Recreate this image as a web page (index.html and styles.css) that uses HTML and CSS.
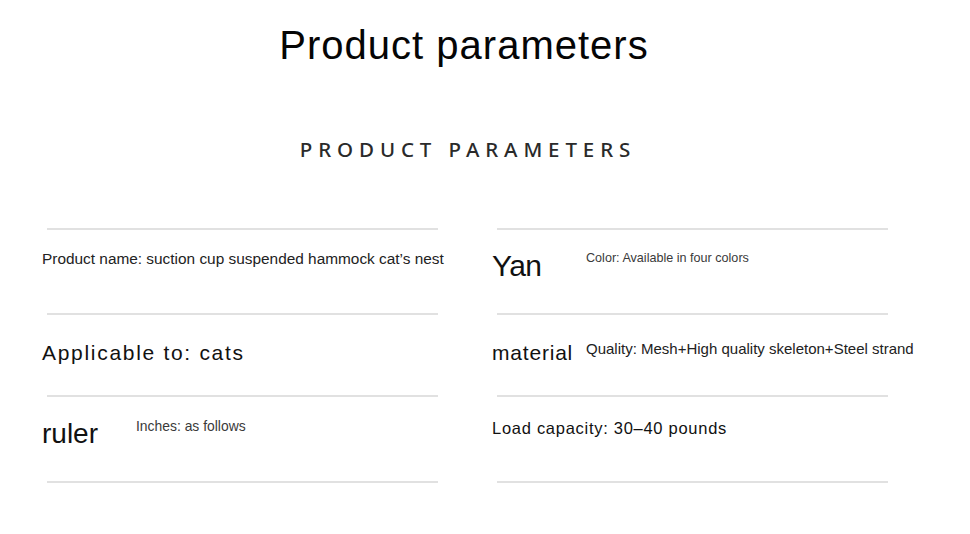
FILE: index.html
```html
<!DOCTYPE html>
<html lang="en">
<head>
<meta charset="utf-8">
<title>Product parameters</title>
<link rel="stylesheet" href="styles.css">
</head>
<body>
<main class="page">
  <h1 class="title">Product parameters</h1>
  <h2 class="subtitle">PRODUCT PARAMETERS</h2>
  <div class="params">
    <div class="cell r1">
      <div class="inner"><span class="t-name">Product name: suction cup suspended hammock cat’s nest</span></div>
    </div>
    <div class="cell r1">
      <div class="inner">
        <span class="label l-yan">Yan</span>
        <span class="small s-color">Color: Available in four colors</span>
      </div>
    </div>
    <div class="cell r2">
      <div class="inner"><span class="t-appl">Applicable to: cats</span></div>
    </div>
    <div class="cell r2">
      <div class="inner">
        <span class="label l-mat">material</span>
        <span class="t-qual">Quality: Mesh+High quality skeleton+Steel strand</span>
      </div>
    </div>
    <div class="cell r3 last">
      <div class="inner">
        <span class="label l-ruler">ruler</span>
        <span class="small s-inch">Inches: as follows</span>
      </div>
    </div>
    <div class="cell r3 last">
      <div class="inner"><span class="t-load">Load capacity: 30–40 pounds</span></div>
    </div>
  </div>
</main>
</body>
</html>
```

FILE: styles.css
```css
* { box-sizing: border-box; }

html, body {
  margin: 0;
  padding: 0;
  background: #ffffff;
}

body {
  font-family: "Liberation Sans", Arial, sans-serif;
  color: #111111;
}

.page {
  width: 936px;
  display: flex;
  flex-direction: column;
}

.title {
  margin: 25px 8px 0 0;
  font-size: 40px;
  line-height: 40px;
  font-weight: 400;
  letter-spacing: 1px;
  text-align: center;
  color: #050505;
}

.subtitle {
  margin: 74px 0 0 0;
  font-family: "Noto Sans", "Open Sans", sans-serif;
  font-size: 20.5px;
  line-height: 20px;
  font-weight: 500;
  letter-spacing: 5.9px;
  text-align: center;
  color: #2a2a2a;
}

.params {
  margin: 69px 0 0 47px;
  display: grid;
  grid-template-columns: 391px 391px;
  column-gap: 59px;
}

.cell {
  border-top: 2px solid #e1e1e1;
}

.cell.last {
  border-bottom: 2px solid #e1e1e1;
}

.r1 { height: 85px; padding-top: 21px; }
.r2 { height: 82px; padding-top: 26px; }
.r3 { height: 88px; padding-top: 22.5px; }

.inner {
  margin-left: -5px;
  display: flex;
  align-items: flex-start;
  white-space: nowrap;
}

.inner span { line-height: 1; }

.label {
  width: 94px;
  flex: none;
  color: #111111;
}

.l-yan { font-size: 30px; letter-spacing: -0.6px; }
.l-mat { font-size: 21px; letter-spacing: 0.8px; margin-top: 0.5px; }
.l-ruler { font-size: 28px; }

.small { color: #3a3a3a; }

.s-color { font-size: 12.6px; margin-top: 1.3px; }
.s-inch { font-size: 13.9px; }

.t-name { font-size: 15.4px; color: #222222; }
.t-appl { font-size: 21px; letter-spacing: 1.7px; margin-top: 1px; }
.t-qual { font-size: 15px; color: #222222; }
.t-load { font-size: 16.5px; letter-spacing: 0.72px; margin-top: 0.6px; }
```
